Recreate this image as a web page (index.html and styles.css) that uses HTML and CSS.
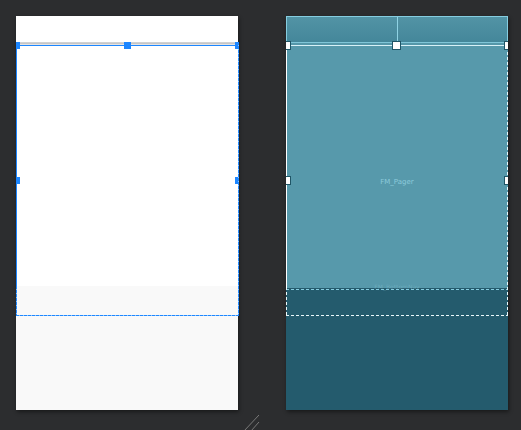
FILE: index.html
```html
<!DOCTYPE html>
<html>
<head>
<meta charset="utf-8">
<link rel="stylesheet" href="styles.css">
</head>
<body>
<div class="editor">
  <div class="panel design">
    <div class="status"></div>
    <div class="appbar"></div>
    <div class="content"></div>
    <div class="bottom"></div>
    <div class="sel">
      <div class="dash dash-l"></div>
      <div class="dash dash-r"></div>
      <div class="dash dash-b"></div>
      <div class="sel-top"></div>
      <div class="sel-edge"></div>
      <span class="h h-tl"></span><span class="h h-tc"></span><span class="h h-tr"></span>
      <span class="h h-ml"></span><span class="h h-mr"></span>
    </div>
  </div>
  <div class="panel blueprint">
    <div class="status"><div class="half"></div><div class="half"></div></div>
    <div class="appbar"></div>
    <div class="content"><span class="label">FM_Pager</span><span class="faint">FM_BottomNav</span></div>
    <div class="bottom"></div>
    <div class="sel">
      <div class="dash dash-l"></div>
      <div class="dash dash-r"></div>
      <div class="dash dash-b"></div>
      <div class="sel-top"></div>
      <div class="sel-edge"></div>
      <span class="h h-tl"></span><span class="h h-tc"></span><span class="h h-tr"></span>
      <span class="h h-ml"></span><span class="h h-mr"></span>
    </div>
  </div>
</div>
<svg class="grip" width="20" height="20" viewBox="0 0 20 20">
  <line x1="0" y1="19" x2="15" y2="3" stroke="#7a7a7a" stroke-width="1"/>
  <line x1="7" y1="19" x2="15" y2="10" stroke="#7a7a7a" stroke-width="1"/>
</svg>
</body>
</html>
```

FILE: styles.css
```css
html, body {
  margin: 0;
  padding: 0;
  background: #2c2d2f;
  width: 521px;
  height: 430px;
  overflow: hidden;
  font-family: "DejaVu Sans", sans-serif;
}
.editor {
  display: flex;
  gap: 48px;
  padding: 16px 0 0 16px;
}
.panel {
  position: relative;
  width: 222px;
  height: 394px;
  display: flex;
  flex-direction: column;
  box-shadow: 1px 2px 4px rgba(0,0,0,0.45);
}
.blueprint { overflow: hidden; }
.design .status { height: 26px; background: #ffffff; flex: none; }
.design .appbar {
  height: 3px;
  flex: none;
  background: linear-gradient(#d2d2d2 0 1px, #c6c6c6 1px 2px, #e4e4e4 2px 3px);
}
.design .content { height: 241px; background: #ffffff; flex: none; }
.design .bottom { flex: 1; background: #f9f9f9; }

.blueprint .status {
  height: 26px;
  flex: none;
  box-sizing: border-box;
  border: 1px solid #86cde0;
  border-bottom: none;
  display: flex;
  background: linear-gradient(#5293a5, #44879a);
}
.blueprint .status .half { flex: 1; }
.blueprint .status .half + .half { border-left: 1px solid #8fd3e4; }
.blueprint .appbar {
  height: 3px;
  flex: none;
  background: linear-gradient(#80c6d8 0 1px, #5597a9 1px 3px);
}
.blueprint .content {
  height: 243px;
  flex: none;
  background: #5799ab;
  position: relative;
  display: flex;
  align-items: center;
  justify-content: center;
}
.blueprint .label {
  font-size: 7px;
  color: #8ccadb;
  font-family: "DejaVu Sans", sans-serif;
  margin-top: 30px;
}
.blueprint .faint {
  position: absolute;
  bottom: -2px;
  left: 0;
  right: 0;
  text-align: center;
  font-size: 6px;
  color: rgba(150, 205, 220, 0.35);
}
.blueprint .bottom {
  flex: 1;
  border-top: 1px solid transparent;
  background-image: repeating-linear-gradient(90deg, #86cde0 0 3px, transparent 3px 5px);
  background-size: 100% 1px;
  background-repeat: no-repeat;
  background-color: #245b6d;
}

.sel {
  position: absolute;
  left: 0;
  right: 0;
  top: 26px;
  height: 274px;
}
.design .sel { right: -1px; }
.dash { position: absolute; }
.dash-l {
  left: 0; top: 0; bottom: 0; width: 1px;
  background: repeating-linear-gradient(180deg, #1f88ff 0 3px, #8cc4ff 3px 4px);
}
.dash-r {
  right: 0; top: 0; bottom: 0; width: 1px;
  background: repeating-linear-gradient(180deg, #1f88ff 0 3px, #8cc4ff 3px 4px);
}
.dash-b {
  left: 0; right: 0; bottom: 0; height: 1px;
  background: repeating-linear-gradient(90deg, #1f88ff 0 3px, #8cc4ff 3px 4px);
}
.sel-top {
  position: absolute;
  left: 0;
  right: 1px;
  top: 3px;
  height: 1px;
  background: #1c86ff;
}
.sel-edge {
  position: absolute;
  left: 0;
  top: 5px;
  width: 1px;
  height: 239px;
  background: #1c86ff;
}
.h {
  position: absolute;
  width: 7px;
  height: 7px;
  box-sizing: border-box;
  background: #1c86ff;
}
.h-tl { left: 0; top: 0; width: 4px; }
.h-tc { left: 108px; top: 0; }
.h-tr { right: 1px; top: 0; width: 3px; }
.h-ml { left: 0; top: 135px; width: 4px; }
.h-mr { right: 1px; top: 135px; width: 3px; }

.blueprint .dash-l, .blueprint .dash-r {
  width: 1px;
  background: repeating-linear-gradient(180deg, #eaf8fb 0 3px, transparent 3px 5px);
}
.blueprint .dash-b {
  background: repeating-linear-gradient(90deg, #eaf8fb 0 3px, transparent 3px 5px);
}
.blueprint .sel-top { background: #d8f1f7; right: 0; }
.blueprint .sel-edge { background: #ffffff; width: 1px; height: 242px; top: 4px; }
.blueprint .h {
  background: #ffffff;
  border: 1px solid #1f5566;
  width: 9px;
  height: 9px;
}
.blueprint .h-tl { left: -4px; top: -1px; }
.blueprint .h-tc { left: 106px; top: -1px; }
.blueprint .h-tr { right: -5px; top: -1px; }
.blueprint .h-ml { left: -4px; top: 134px; }
.blueprint .h-mr { right: -5px; top: 134px; }

.grip {
  position: absolute;
  left: 244px;
  top: 412px;
}
```
